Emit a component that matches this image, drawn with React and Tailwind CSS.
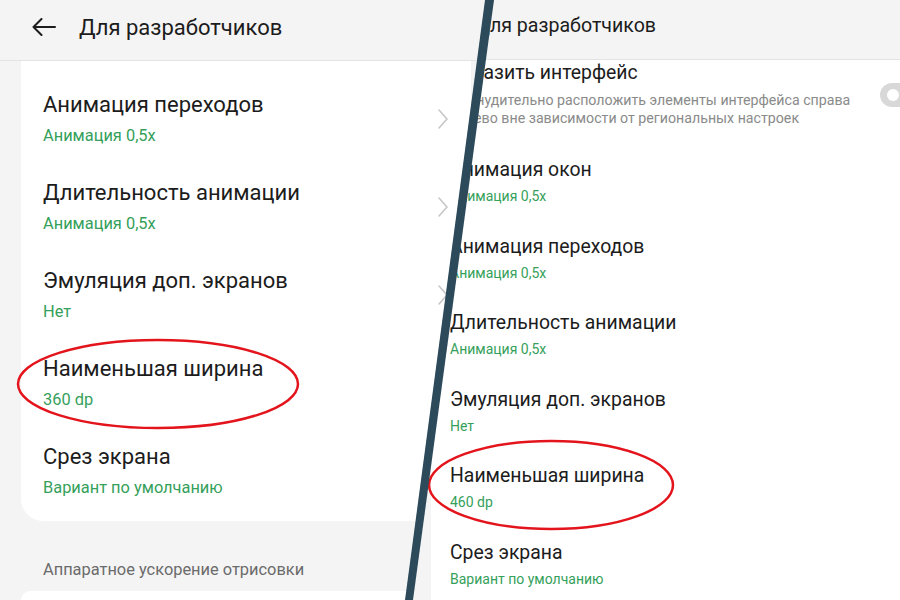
import React from "react";

const leftItems = [
  { title: "Анимация переходов", value: "Анимация 0,5x" },
  { title: "Длительность анимации", value: "Анимация 0,5x" },
  { title: "Эмуляция доп. экранов", value: "Нет" },
  { title: "Наименьшая ширина", value: "360 dp" },
  { title: "Срез экрана", value: "Вариант по умолчанию" },
];

const rightItems = [
  { title: "Анимация окон", value: "Анимация 0,5x" },
  { title: "Анимация переходов", value: "Анимация 0,5x" },
  { title: "Длительность анимации", value: "Анимация 0,5x" },
  { title: "Эмуляция доп. экранов", value: "Нет" },
  { title: "Наименьшая ширина", value: "460 dp" },
  { title: "Срез экрана", value: "Вариант по умолчанию" },
];

const BackArrow = ({ className }) => (
  <svg className={className} viewBox="0 0 24 18" fill="none">
    <path d="M23 9H1.5M9.5 1L1.5 9l8 8" stroke="#1c1c1c" strokeWidth="2" strokeLinecap="round" strokeLinejoin="round" />
  </svg>
);

const Chevron = () => (
  <svg className="w-[10px] h-[20px] shrink-0" viewBox="0 0 10 20" fill="none">
    <path d="M1 1l8 9-8 9" stroke="#c6c6c6" strokeWidth="1.6" strokeLinecap="round" strokeLinejoin="round" />
  </svg>
);

export default function App() {
  return (
    <div className="relative w-[900px] h-[600px] overflow-hidden bg-[#f4f4f4] font-['Roboto',sans-serif]">
      {/* Left screenshot */}
      <div className="flex flex-col w-full h-full">
        <div className="h-[61px] shrink-0 flex items-center pb-[6px] border-b border-[#e3e3e3]">
          <BackArrow className="w-[24px] h-[18px] ml-[32px]" />
          <span className="ml-[23px] text-[22px] text-[#1c1c1c]">Для разработчиков</span>
        </div>
        <div className="ml-[21px] w-[450px] bg-white rounded-b-[22px] pt-[14px] pb-[6px] pl-[22px] pr-[23px]">
          {leftItems.map((item) => (
            <div key={item.title} className="h-[88px] pt-[16px] pb-[17px] flex items-center">
              <div className="flex-1">
                <div className="text-[22px] leading-[28px] text-[#1c1c1c]">{item.title}</div>
                <div className="mt-[6px] text-[16.4px] leading-[22px] text-[#35a05a]">{item.value}</div>
              </div>
              <Chevron />
            </div>
          ))}
        </div>
        <div className="mt-[38px] pl-[43px] text-[16.4px] leading-[22px] text-[#6b6b6b]">
          Аппаратное ускорение отрисовки
        </div>
        <div className="mt-[10px] ml-[21px] w-[450px] h-[40px] bg-white rounded-t-[22px]" />
      </div>

      {/* Right screenshot, cut along the diagonal */}
      <div className="absolute top-0 left-[413px] w-[487px] h-full overflow-hidden bg-[#f4f4f4] flex flex-col [clip-path:polygon(77px_0,100%_0,100%_100%,-8px_100%)]">
        <div className="h-[60px] shrink-0 flex items-start pt-[14px] border-b border-[#e3e3e3]">
          <BackArrow className="w-[21px] h-[16px] ml-[27px] mt-[4px]" />
          <span className="ml-[14px] text-[19.6px] leading-[24px] text-[#1c1c1c]">Для разработчиков</span>
        </div>
        <div className="ml-[18px] flex-1 bg-white pl-[19px] pt-[1px]">
          <div className="h-[83px] flex items-start">
            <div className="w-[430px] shrink-0">
              <div className="text-[19.4px] leading-[24px] text-[#1c1c1c]">Отразить интерфейс</div>
              <div className="mt-[6px] text-[14.2px] leading-[18px] text-[#8a8a8a]">
                <div>Принудительно расположить элементы интерфейса справа</div>
                <div>налево вне зависимости от региональных настроек</div>
              </div>
            </div>
            <div className="mt-[22px] w-[46px] h-[24px] shrink-0 rounded-full bg-[#d8d8d8] flex items-center pl-[7px]">
              <div className="w-[12px] h-[12px] rounded-full bg-white" />
            </div>
          </div>
          {rightItems.map((item) => (
            <div key={item.title} className="h-[76.6px] pt-[14px]">
              <div className="text-[19.4px] leading-[24px] text-[#1c1c1c]">{item.title}</div>
              <div className="mt-[5px] text-[14px] leading-[18px] text-[#35a05a]">{item.value}</div>
            </div>
          ))}
        </div>
        <svg className="absolute inset-0 w-full h-full pointer-events-none" fill="none">
          <ellipse cx="138" cy="485" rx="122" ry="44" stroke="#e3141b" strokeWidth="2.5" />
        </svg>
      </div>

      {/* annotations */}
      <svg className="absolute inset-0 w-[900px] h-[600px] pointer-events-none" fill="none">
        <ellipse cx="158" cy="384" rx="140" ry="44" stroke="#e3141b" strokeWidth="2.5" />
        <polygon points="485,0 494,0 413,600 405,600" fill="#2d4a5b" />
      </svg>
    </div>
  );
}
